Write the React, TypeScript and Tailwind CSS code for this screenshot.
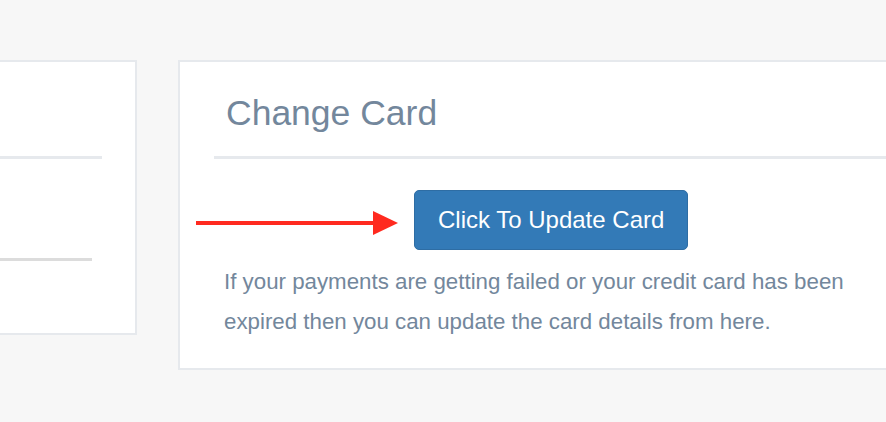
export default function App() {
  return (
    <div className="h-[422px] w-[886px] overflow-hidden bg-[#f7f7f7] font-['Liberation_Sans',Arial,sans-serif]">
      <div className="ml-[-200px] flex items-start gap-[41px] pt-[60px]">
        {/* Previous panel, cut off on the left */}
        <div className="flex h-[275px] w-[337px] shrink-0 flex-col border-2 border-[#e6e9ed] bg-white pr-[33px] pt-[94px]">
          <div className="h-[3px] bg-[#e6e9ed]" />
          <div className="mr-[10px] mt-[99px] h-[3px] bg-[#dcdcdc]" />
        </div>

        {/* Change Card panel */}
        <div className="w-[760px] shrink-0 border-2 border-[#e6e9ed] bg-white px-[34px] pb-[26px] pt-[31px]">
          <h2 className="pl-[12px] text-[35.5px] leading-[40px] text-[#73879c]">Change Card</h2>
          <div className="mt-[23px] h-[3px] bg-[#e6e9ed]" />

          <div className="relative mt-[31px] flex pl-[200px]">
            <svg
              className="absolute left-[-18px] top-[21px]"
              width="202"
              height="24"
              viewBox="0 0 202 24"
            >
              <line x1="0" y1="12" x2="180" y2="12" stroke="#ff2a1f" strokeWidth="4" />
              <polygon points="177,0 202,12 177,24" fill="#ff2a1f" />
            </svg>
            <button className="h-[60px] rounded-[5px] border border-[#2e6da4] bg-[#337ab7] px-[23px] text-[24px] text-white">
              Click To Update Card
            </button>
          </div>

          <p className="mt-[12px] max-w-[660px] pl-[10px] text-[22.3px] leading-[40px] text-[#73879c]">
            If your payments are getting failed or your credit card has been expired then you can
            update the card details from here.
          </p>
        </div>
      </div>
    </div>
  );
}
